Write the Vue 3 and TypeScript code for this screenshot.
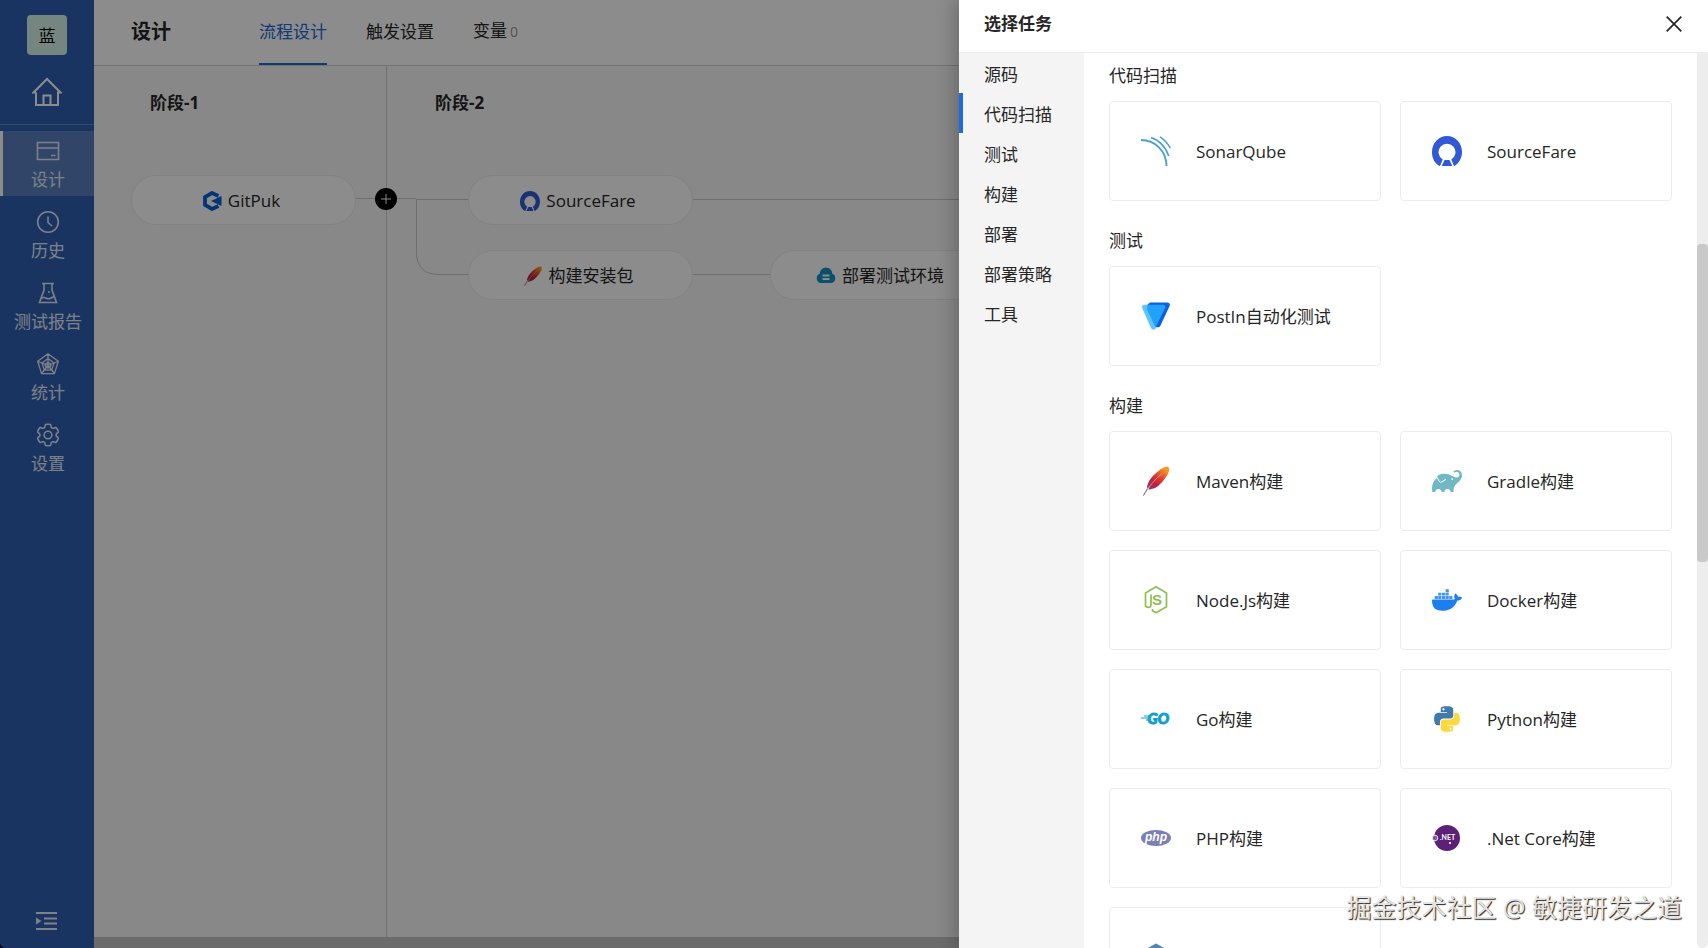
<script setup lang="ts">
import { ref } from 'vue'

interface NavItem { id: string; label: string }
interface Task { id: string; label: string }
interface Section { title: string; tasks: Task[] }
interface FlowNode { id: string; label: string; place: string }

const navItems: NavItem[] = [
  { id: 'design', label: '设计' },
  { id: 'history', label: '历史' },
  { id: 'report', label: '测试报告' },
  { id: 'stats', label: '统计' },
  { id: 'setting', label: '设置' },
]
const activeNav = ref('design')

const tabs = ['流程设计', '触发设置', '变量']
const activeTab = ref('流程设计')

const nodes: FlowNode[] = [
  { id: 'gitpuk', label: 'GitPuk', place: 'node-a' },
  { id: 'sourcefare', label: 'SourceFare', place: 'node-b' },
  { id: 'maven', label: '构建安装包', place: 'node-c' },
  { id: 'cloud', label: '部署测试环境', place: 'node-d' },
]

const categories = ['源码', '代码扫描', '测试', '构建', '部署', '部署策略', '工具']
const activeCategory = ref('代码扫描')

const sections: Section[] = [
  {
    title: '代码扫描',
    tasks: [
      { id: 'sonar', label: 'SonarQube' },
      { id: 'sourcefare', label: 'SourceFare' },
    ],
  },
  { title: '测试', tasks: [{ id: 'postin', label: 'PostIn自动化测试' }] },
  {
    title: '构建',
    tasks: [
      { id: 'maven', label: 'Maven构建' },
      { id: 'gradle', label: 'Gradle构建' },
      { id: 'node', label: 'Node.Js构建' },
      { id: 'docker', label: 'Docker构建' },
      { id: 'go', label: 'Go构建' },
      { id: 'python', label: 'Python构建' },
      { id: 'php', label: 'PHP构建' },
      { id: 'dotnet', label: '.Net Core构建' },
      { id: 'hex', label: '' },
    ],
  },
]
</script>

<template>
  <div class="app">
    <svg class="gradients" width="0" height="0" aria-hidden="true">
      <defs>
        <linearGradient id="feather" x1="24" y1="3" x2="7" y2="24" gradientUnits="userSpaceOnUse">
          <stop offset="0" stop-color="#f69923" />
          <stop offset="0.35" stop-color="#e0442b" />
          <stop offset="0.65" stop-color="#c0203f" />
          <stop offset="1" stop-color="#8b3a7c" />
        </linearGradient>
      </defs>
    </svg>
    <svg class="sprite" aria-hidden="true">
      <symbol id="i-home" viewBox="0 0 30 30">
        <path d="M4 15.500H1.500L15 2l13.500 13.500H26V28H4V15.500M11.500 28v-9.500h7V28" fill="none" stroke="currentColor" stroke-width="2" />
      </symbol>
      <symbol id="i-design" viewBox="0 0 24 24">
        <path d="M1.500 3.500h21v17h-21zM1.500 9h21M15 16.500h4.500" fill="none" stroke="currentColor" stroke-width="1.600" />
      </symbol>
      <symbol id="i-history" viewBox="0 0 24 24">
        <circle cx="12" cy="12" r="10.300" fill="none" stroke="currentColor" stroke-width="1.600" />
        <path d="M12 6.500v6l4 3.500" fill="none" stroke="currentColor" stroke-width="1.600" />
      </symbol>
      <symbol id="i-report" viewBox="0 0 24 24">
        <path d="M6 2.500h12M8 2.500V9L3.500 21.500h17L16 9V2.500M5 17.500c4-3 6 1.500 9 0s3-2 4.500-1" fill="none" stroke="currentColor" stroke-width="1.600" />
        <circle cx="13" cy="11" r="1" fill="currentColor" />
      </symbol>
      <symbol id="i-stats" viewBox="0 0 24 24">
        <path d="M12 1.800l10.300 7.500-3.900 12.400H5.600L1.700 9.300zM12 6.500l6 4.400-2.300 7.200H8.300L6 10.900zM12 10l3 2.400-1 3.400h-4l-1-3.400zM12 2v11M2 9.500l10 4M22 9.500l-10 4M6 21l6-7.500M18 21l-6-7.500" fill="none" stroke="currentColor" stroke-width="1.300" />
      </symbol>
      <symbol id="i-setting" viewBox="2 2 20 20">
        <path d="M9.594 3.940c.09-.542.56-.94 1.110-.94h2.593c.55 0 1.020.398 1.110.94l.213 1.281c.063.374.313.686.645.87.074.04.147.083.22.127.325.196.72.257 1.075.124l1.217-.456a1.125 1.125 0 0 1 1.370.49l1.296 2.247a1.125 1.125 0 0 1-.26 1.431l-1.003.827c-.293.241-.438.613-.43.992a7.723 7.723 0 0 1 0 .255c-.008.378.137.75.43.991l1.004.827c.424.35.534.955.26 1.430l-1.298 2.247a1.125 1.125 0 0 1-1.369.491l-1.217-.456c-.355-.133-.75-.072-1.076.124a6.470 6.470 0 0 1-.22.128c-.331.183-.581.495-.644.869l-.213 1.281c-.09.543-.56.94-1.110.94h-2.594c-.55 0-1.019-.398-1.110-.94l-.213-1.281c-.062-.374-.312-.686-.644-.87a6.520 6.520 0 0 1-.22-.127c-.325-.196-.72-.257-1.076-.124l-1.217.456a1.125 1.125 0 0 1-1.369-.49l-1.297-2.247a1.125 1.125 0 0 1 .26-1.431l1.004-.827c.292-.24.437-.613.43-.991a6.932 6.932 0 0 1 0-.255c.007-.38-.138-.751-.43-.992l-1.004-.827a1.125 1.125 0 0 1-.26-1.430l1.297-2.247a1.125 1.125 0 0 1 1.370-.491l1.216.456c.356.133.751.072 1.076-.124.072-.044.146-.086.22-.128.332-.183.582-.495.644-.869l.214-1.280Z" fill="none" stroke="currentColor" stroke-width="1.300" />
        <circle cx="12" cy="12" r="3.200" fill="none" stroke="currentColor" stroke-width="1.300" />
      </symbol>
      <symbol id="i-expand" viewBox="0 0 22 20">
        <path d="M0 2h21M8 7.500h13M8 12.500h13M0 18h21" fill="none" stroke="currentColor" stroke-width="1.800" />
        <path d="M0 6.500v7L5.500 10z" fill="currentColor" />
      </symbol>
      <symbol id="i-close" viewBox="0 0 16 16">
        <path d="M.7.7l14.600 14.600M15.300.7L.7 15.300" fill="none" stroke="currentColor" stroke-width="1.700" />
      </symbol>
      <symbol id="i-gitpuk" viewBox="0 0 20 20">
        <path d="M16.500 5L10 2 3 6v8l7 4 6.500-3" fill="none" stroke="#0a5fd8" stroke-width="3.800" />
        <path d="M9 10l10.500-5v10z" fill="#0a5fd8" />
      </symbol>
      <symbol id="i-cloud" viewBox="0 0 20 20">
        <path d="M5 17a4.800 4.800 0 0 1-1.300-9.200 6.300 6.300 0 0 1 12.600 0A4.800 4.800 0 0 1 15 17z" fill="#1192c4" />
        <path d="M6.500 8.500h7v2h-7zM6.500 12h7v2h-7z" fill="#fff" />
      </symbol>
      <symbol id="i-sonar" viewBox="0 0 30 30">
        <path d="M0 4c14 0 25.500 11 25.500 26" fill="none" stroke="#4b9fd0" stroke-width="1.900" />
        <path d="M10 1.500c8 2.500 15 9.500 17.800 18.500" fill="none" stroke="#4b9fd0" stroke-width="1.700" />
        <path d="M19 .8c4.500 3 8 6.800 10.500 11.400" fill="none" stroke="#4b9fd0" stroke-width="1.400" />
      </symbol>
      <symbol id="i-sourcefare" viewBox="0 0 30 30">
        <path d="M8 30h-.5A16 16 0 0 1 0 16C0 7 6.500 0 15 0s15 7 15 16c0 6-3 11-7.500 14H22l-2.700-6.500a8.500 8.500 0 1 0-8.600 0z" fill="#3159d6" />
        <path d="M12.500 24h5L20.300 30H9.700z" fill="#3159d6" />
      </symbol>
      <symbol id="i-postin" viewBox="0 0 30 30">
        <path d="M9 1.500h17c2.500 0 3.500 1.700 2.600 3.600L19.500 24.500c-.6 1.300-1.400 1.800-2.500 1.800h-2L6.500 3.500z" fill="#0b62e0" />
        <path d="M3.500 3.700h4L15 27c-1 2-4 2-5 0L1.200 7C.5 5.200 1.700 3.700 3.500 3.700z" fill="#5cc5fc" />
        <path d="M6.500 3.700h15.300c2.400 0 3.200 1.600 2.300 3.300L14.500 26.500 6 8.500z" fill="#22a1fb" />
      </symbol>
      <symbol id="i-maven" viewBox="0 0 30 30">
        <path d="M27.500 1.200c1.500 2 .5 5-1 7.500-3 5-8 11-12.500 13.200l-4 1.300-3 .3 1.500-2-2.500.5C6 16 12 9 17.500 5 21 2 25.500-.2 27.500 1.200z" fill="url(#feather)" />
        <path d="M21.500 7C15 12.500 8 20 2.500 29.500" fill="none" stroke="#e7a6a0" stroke-width=".8" />
        <path d="M6.500 22.500C5 25 3.500 27.500 2.500 29.500" fill="none" stroke="#6f6a8c" stroke-width="1" />
      </symbol>
      <symbol id="i-gradle" viewBox="0 0 24 24">
        <path d="M22.695 4.297a3.807 3.807 0 0 0-5.290-.09.368.368 0 0 0 0 .533l.46.47a.363.363 0 0 0 .474.032 2.182 2.182 0 0 1 2.860 3.291c-3.023 3.020-7.056-5.447-16.211-1.083a1.240 1.240 0 0 0-.534 1.745l1.571 2.713a1.238 1.238 0 0 0 1.681.461l.037-.02-.029.02.688-.384a16.083 16.083 0 0 0 2.193-1.635.384.384 0 0 1 .499-.016.357.357 0 0 1 .016.534 16.435 16.435 0 0 1-2.316 1.741H8.770l-.696.39a1.958 1.958 0 0 1-.963.25 1.987 1.987 0 0 1-1.726-.989L3.900 9.696C1.060 11.720-.686 15.603.26 20.522a.363.363 0 0 0 .354.296h1.675a.363.363 0 0 0 .37-.331 2.478 2.478 0 0 1 4.915 0 .36.36 0 0 0 .357.317h1.638a.363.363 0 0 0 .357-.317 2.478 2.478 0 0 1 4.914 0 .363.363 0 0 0 .358.317h1.627a.363.363 0 0 0 .363-.357c.037-2.294.656-4.930 2.420-6.250 6.108-4.570 4.502-8.486 3.088-9.900zm-6.229 6.901l-1.165-.584a.73.73 0 1 1 1.165.587z" fill="#71b8c4" />
      </symbol>
      <symbol id="i-node" viewBox="0 0 30 30">
        <path d="M11.500 24v1.700l3.500 2 10.500-6V8L15 1.800 4.500 8v13.200c3 2 5.500 1.500 5.500-1.200V9.500" fill="none" stroke="#8cc152" stroke-width="1.700" stroke-linejoin="round" />
        <text x="11" y="19.500" font-family="Liberation Sans, sans-serif" font-size="15" font-weight="700" fill="#8cc152">S</text>
      </symbol>
      <symbol id="i-docker" viewBox="0 0 24 24">
        <path d="M23.763 9.890c-.065-.051-.672-.51-1.954-.51-.338.001-.676.03-1.010.087-.248-1.700-1.653-2.530-1.716-2.566l-.344-.199-.226.327c-.284.438-.49.922-.612 1.430-.23.97-.09 1.882.403 2.661-.595.332-1.550.413-1.744.42H.751a.751.751 0 0 0-.75.748 11.376 11.376 0 0 0 .692 4.062c.545 1.428 1.355 2.480 2.410 3.124 1.180.723 3.100 1.137 5.275 1.137.983.003 1.963-.086 2.930-.266a12.248 12.248 0 0 0 3.823-1.389c.98-.567 1.860-1.288 2.610-2.136 1.252-1.418 1.998-2.997 2.553-4.400h.221c1.372 0 2.215-.549 2.680-1.009.309-.293.55-.65.707-1.046l.098-.288Z" fill="#1d7ef0" />
        <path d="M2.200 8.800h2.500v2.300H2.200zM5 8.800h2.500v2.300H5zM8 8.800h2.500v2.300H8zM10.900 8.800h2.500v2.300h-2.500zM13.800 8.800h2.500v2.300h-2.500zM5 6.100h2.500v2.300H5zM8 6.100h2.500v2.300H8zM10.900 6.100h2.500v2.300h-2.500zM10.900 3.400h2.500v2.300h-2.500z" fill="#3f93f2" />
      </symbol>
      <symbol id="i-go" viewBox="0 0 30 30">
        <path d="M3 12h5M0 14h7M5 16h2" stroke="#0f9fce" stroke-width="1" fill="none" />
        <text x="6.500" y="20" font-family="Lato, sans-serif" font-size="15" font-weight="900" font-style="italic" fill="#0f9fce" stroke="#0f9fce" stroke-width="1">GO</text>
      </symbol>
      <symbol id="i-python" viewBox="-2 -2 28 28">
        <path d="M14.250.18l.9.2.73.26.59.3.45.32.34.34.25.34.16.33.1.3.04.26.02.2-.01.13V8.500l-.05.63-.13.55-.21.46-.26.38-.3.31-.33.25-.35.19-.35.14-.33.1-.3.07-.26.04-.21.02H8.770l-.69.05-.59.14-.5.22-.41.27-.33.32-.27.35-.2.36-.15.37-.1.35-.07.32-.04.27-.02.21v3.060H3.170l-.21-.03-.28-.07-.32-.12-.35-.18-.36-.26-.36-.36-.35-.46-.32-.59-.28-.73-.21-.88-.14-1.050-.05-1.230.06-1.220.16-1.040.24-.87.32-.71.36-.57.4-.44.42-.33.42-.24.4-.16.36-.1.32-.05.24-.01h.16l.06.01h8.160v-.83H6.180l-.01-2.750-.02-.37.05-.34.11-.31.17-.28.25-.26.31-.23.38-.2.44-.18.51-.15.58-.12.64-.1.71-.06.77-.04.84-.02 1.270.05zm-6.300 1.980l-.23.33-.08.41.08.41.23.34.33.22.41.09.41-.09.33-.22.23-.34.08-.41-.08-.41-.23-.33-.33-.22-.41-.09-.41.09z" fill="#4079ab" />
        <path transform="rotate(180 12 12)" d="M14.250.18l.9.2.73.26.59.3.45.32.34.34.25.34.16.33.1.3.04.26.02.2-.01.13V8.500l-.05.63-.13.55-.21.46-.26.38-.3.31-.33.25-.35.19-.35.14-.33.1-.3.07-.26.04-.21.02H8.770l-.69.05-.59.14-.5.22-.41.27-.33.32-.27.35-.2.36-.15.37-.1.35-.07.32-.04.27-.02.21v3.060H3.170l-.21-.03-.28-.07-.32-.12-.35-.18-.36-.26-.36-.36-.35-.46-.32-.59-.28-.73-.21-.88-.14-1.050-.05-1.230.06-1.220.16-1.040.24-.87.32-.71.36-.57.4-.44.42-.33.42-.24.4-.16.36-.1.32-.05.24-.01h.16l.06.01h8.160v-.83H6.180l-.01-2.750-.02-.37.05-.34.11-.31.17-.28.25-.26.31-.23.38-.2.44-.18.51-.15.58-.12.64-.1.71-.06.77-.04.84-.02 1.270.05zm-6.300 1.980l-.23.33-.08.41.08.41.23.34.33.22.41.09.41-.09.33-.22.23-.34.08-.41-.08-.41-.23-.33-.33-.22-.41-.09-.41.09z" fill="#ffd83e" />
      </symbol>
      <symbol id="i-php" viewBox="0 0 30 30">
        <ellipse cx="15" cy="15" rx="15" ry="8" fill="#7b7fb5" />
        <text x="15" y="18" text-anchor="middle" font-family="Liberation Sans, sans-serif" font-size="12" font-weight="700" font-style="italic" fill="#fff">php</text>
      </symbol>
      <symbol id="i-dotnet" viewBox="0 0 30 30">
        <circle cx="15" cy="15" r="13" fill="#5c2077" />
        <circle cx="3" cy="15" r="2.800" fill="#7d5aa0" stroke="#fff" stroke-width=".8" />
        <text x="15.500" y="16.500" text-anchor="middle" font-family="Lato, sans-serif" font-size="7" font-weight="700" fill="#fff">.NET</text>
        <circle cx="18" cy="20" r="1.100" fill="#fff" />
      </symbol>
      <symbol id="i-hex" viewBox="0 0 30 30">
        <path d="M15 2.500l12 6.800v13.400l-12 6.800-12-6.800V9.300z" fill="#4f86b8" stroke="#4f86b8" stroke-width="2" stroke-linejoin="round" />
      </symbol>
    </svg>

    <aside class="sidebar">
      <div class="avatar">蓝</div>
      <a class="home" href="#" aria-label="首页"><svg><use href="#i-home" /></svg></a>
      <nav class="nav">
        <a
          v-for="item in navItems"
          :key="item.id"
          href="#"
          class="nav-item"
          :class="{ active: activeNav === item.id }"
          @click.prevent="activeNav = item.id"
        >
          <svg><use :href="`#i-${item.id}`" /></svg>
          <span>{{ item.label }}</span>
        </a>
      </nav>
      <button class="expand" type="button" aria-label="展开"><svg><use href="#i-expand" /></svg></button>
    </aside>

    <main class="main">
      <header class="topbar">
        <h1>设计</h1>
        <nav class="tabs">
          <button
            v-for="tab in tabs"
            :key="tab"
            type="button"
            class="tab"
            :class="{ active: activeTab === tab }"
            @click="activeTab = tab"
          >{{ tab }}<small v-if="tab === '变量'">0</small></button>
        </nav>
      </header>
      <div class="canvas">
        <section class="stage first"><h2>阶段-1</h2></section>
        <section class="stage"><h2>阶段-2</h2></section>
        <svg class="edges" aria-hidden="true">
          <path d="M261 132.500H322M322 133.500H375M322.500 133V186Q322.500 208.500 345 208.500H375M598 133.500H900M598 208.500H676" />
        </svg>
        <button v-for="n in nodes" :key="n.place" type="button" class="node" :class="n.place">
          <svg><use :href="`#i-${n.id}`" /></svg>{{ n.label }}
        </button>
        <button class="add" type="button" aria-label="添加阶段">
          <svg viewBox="0 0 22 22"><path d="M11 6v10M6 11h10" /></svg>
        </button>
      </div>
      <div class="hscroll"></div>
    </main>

    <div class="mask"></div>

    <section class="drawer" role="dialog" aria-labelledby="drawer-title">
      <header class="drawer-head">
        <h2 id="drawer-title">选择任务</h2>
        <button class="close" type="button" aria-label="关闭"><svg><use href="#i-close" /></svg></button>
      </header>
      <div class="drawer-body">
        <nav class="categories">
          <button
            v-for="c in categories"
            :key="c"
            type="button"
            :class="{ active: activeCategory === c }"
            @click="activeCategory = c"
          >{{ c }}</button>
        </nav>
        <div class="tasks">
          <section v-for="s in sections" :key="s.title" class="group">
            <h3>{{ s.title }}</h3>
            <div class="grid">
              <button v-for="t in s.tasks" :key="t.id" type="button" class="card">
                <svg><use :href="`#i-${t.id}`" /></svg>
                <span>{{ t.label }}</span>
              </button>
            </div>
          </section>
        </div>
        <div class="track"><div class="thumb"></div></div>
      </div>
    </section>

    <div class="watermark">掘金技术社区 @ 敏捷研发之道</div>
  </div>
</template>

<style>
body {
  margin: 0;
  overflow: hidden;
  background: #05060f;
}
</style>

<style scoped>
.app {
  position: relative;
  display: flex;
  height: 100vh;
  overflow: hidden;
  border-radius: 0 0 0 6px;
  font-family: "Open Sans", "Noto Sans CJK SC", sans-serif;
  font-size: 17px;
  line-height: 26px;
  color: #262626;
}
.app * {
  box-sizing: border-box;
}
.gradients {
  position: absolute;
}
.sprite {
  display: none;
}
h1, h2, h3 {
  margin: 0;
}
button {
  padding: 0;
  border: 0;
  background: none;
  font: inherit;
  color: inherit;
  cursor: pointer;
}
a {
  color: inherit;
  text-decoration: none;
}
svg {
  display: block;
  flex: none;
}

.sidebar {
  flex: none;
  display: flex;
  flex-direction: column;
  align-items: center;
  width: 94px;
  padding: 15px 0 17px;
  background: #3060b2;
  color: #fff;
}
.avatar {
  width: 40px;
  height: 40px;
  padding-top: 1px;
  border-radius: 4px;
  background: #d6f2e9;
  color: #000;
  line-height: 40px;
  text-align: center;
}
.home {
  display: flex;
  justify-content: center;
  width: 100%;
  height: 70px;
  padding-top: 22px;
  border-bottom: 1px solid #5f86c6;
}
.home svg {
  width: 30px;
  height: 30px;
}
.nav {
  display: flex;
  flex-direction: column;
  gap: 6px;
  width: 100%;
  margin-top: 6px;
}
.nav-item {
  display: flex;
  flex-direction: column;
  align-items: center;
  gap: 4px;
  height: 65px;
  padding: 8px 1px 0 0;
  border-left: 3px solid transparent;
  color: #e4ebf7;
}
.nav-item.active {
  border-left-color: #fff;
  background: #5a7fc0;
}
.nav-item svg {
  width: 24px;
  height: 24px;
}
.expand {
  margin-top: auto;
  color: #e4ebf7;
}
.expand svg {
  width: 22px;
  height: 20px;
}

.main {
  flex: 1;
  display: flex;
  flex-direction: column;
  min-width: 0;
}
.topbar {
  flex: none;
  display: flex;
  align-items: stretch;
  gap: 88px;
  height: 66px;
  padding-left: 37px;
  border-bottom: 1px solid #d0d0d0;
  background: #fff;
}
.topbar h1 {
  font-size: 20px;
  line-height: 64px;
}
.tabs {
  display: flex;
  gap: 39px;
}
.tab {
  border-bottom: 2px solid transparent;
}
.tab.active {
  border-bottom-color: #2068d8;
  color: #2068d8;
}
.tab small {
  margin-left: 3px;
  font-size: 14px;
  color: #999;
}
.canvas {
  position: relative;
  flex: 1;
  display: flex;
  overflow: hidden;
  background: #f7f7f7;
}
.stage {
  padding: 24px 48px;
}
.stage.first {
  width: 293px;
  padding-left: 56px;
  border-right: 1px solid #cfcfcf;
}
.stage h2 {
  font-size: 17px;
}
.edges {
  position: absolute;
  inset: 0;
  width: 100%;
  height: 100%;
  fill: none;
  stroke: #c8c8c8;
}
.node {
  position: absolute;
  display: flex;
  align-items: center;
  justify-content: center;
  gap: 6px;
  width: 225px;
  height: 50px;
  padding: 1px 5px 0 0;
  border: 1px solid #ececec;
  border-radius: 25px;
  background: #fff;
}
.node svg {
  width: 20px;
  height: 20px;
}
.node-a { left: 37px; top: 109px; }
.node-b { left: 374px; top: 109px; }
.node-c { left: 374px; top: 184px; }
.node-d { left: 676px; top: 184px; }
.add {
  position: absolute;
  left: 281px;
  top: 122px;
  width: 22px;
  height: 22px;
  border-radius: 50%;
  background: #000;
}
.add path {
  stroke: #fff;
  stroke-width: 1;
}
.hscroll {
  flex: none;
  height: 11px;
  background: #c4c4c4;
}

.mask {
  position: absolute;
  inset: 0;
  background: rgba(0, 0, 0, 0.45);
}

.drawer {
  position: absolute;
  top: 0;
  right: 0;
  bottom: 0;
  display: flex;
  flex-direction: column;
  width: 749px;
  background: #fff;
  box-shadow: -6px 0 16px rgba(0, 0, 0, 0.2);
}
.drawer-head {
  flex: none;
  display: flex;
  align-items: center;
  justify-content: space-between;
  height: 53px;
  padding: 0 26px 4px 25px;
  border-bottom: 1px solid #ececec;
}
.drawer-head h2 {
  font-size: 17px;
}
.close svg {
  width: 16px;
  height: 16px;
}
.drawer-body {
  flex: 1;
  display: flex;
  min-height: 0;
}
.categories {
  flex: none;
  display: flex;
  flex-direction: column;
  width: 125px;
  background: #f4f4f4;
}
.categories button {
  height: 40px;
  padding: 3px 0 0 21px;
  border-left: 4px solid transparent;
  text-align: left;
}
.categories button.active {
  border-left-color: #1f6bdc;
}
.tasks {
  flex: 1;
  display: flex;
  flex-direction: column;
  gap: 27px;
  padding: 10px 25px 0;
  overflow: hidden;
}
.group {
  flex: none;
}
.group h3 {
  margin-bottom: 12px;
  font-size: 17px;
  font-weight: 400;
}
.grid {
  display: grid;
  grid-template-columns: 1fr 1fr;
  gap: 19px;
}
.card {
  display: flex;
  align-items: center;
  gap: 25px;
  height: 100px;
  padding: 0 31px;
  border: 1px solid #ececec;
  border-radius: 4px;
}
.card svg {
  width: 30px;
  height: 30px;
}
.card span {
  padding-top: 1px;
}
.track {
  flex: none;
  width: 11px;
  padding-top: 191px;
  border-radius: 0 0 6px 6px;
  background: #ededed;
}
.thumb {
  height: 318px;
  border-radius: 4px;
  background: #c9c9c9;
}

.watermark {
  position: absolute;
  right: 26px;
  bottom: 23px;
  font-size: 25px;
  line-height: 36px;
  color: #e4e4e4;
  text-shadow: 1px 1px 1px #222;
}
</style>
